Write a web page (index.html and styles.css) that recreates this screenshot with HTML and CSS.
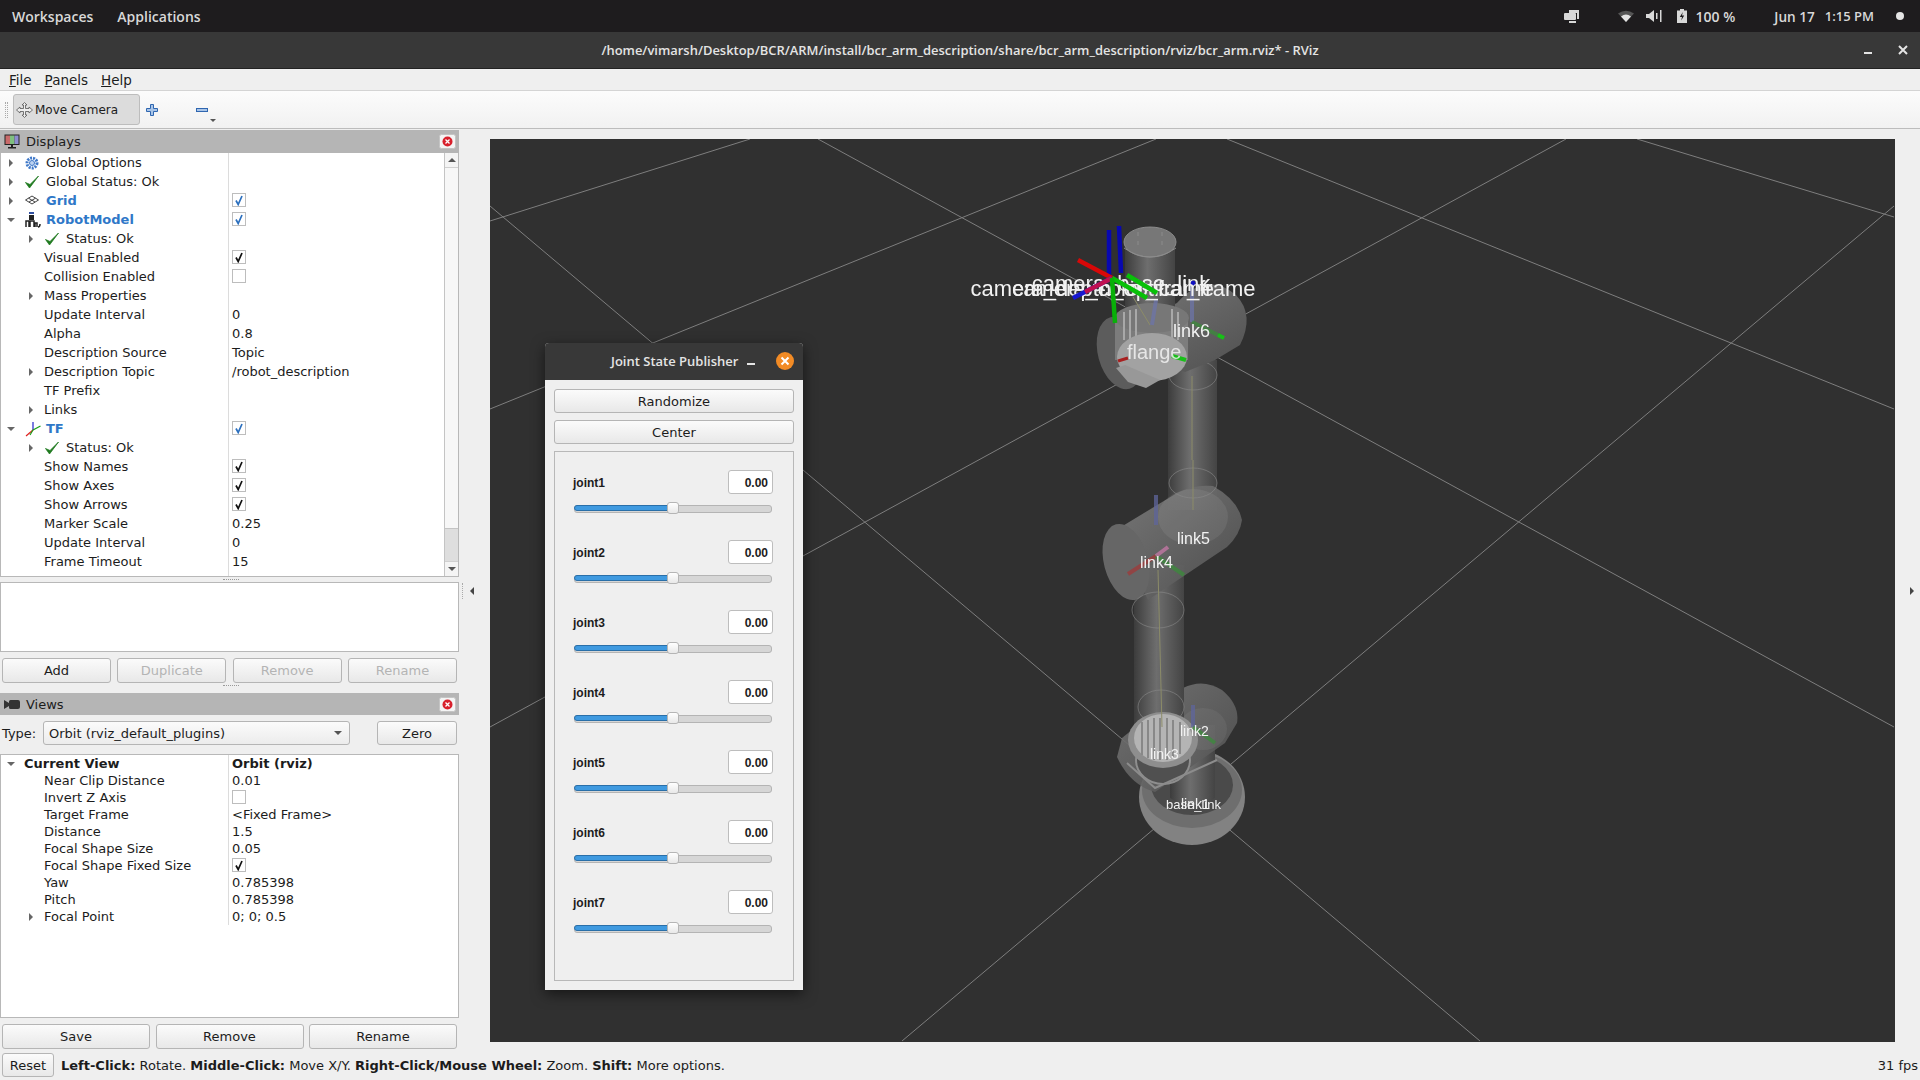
FILE: index.html
```html
<!DOCTYPE html>
<html lang="en">
<head>
    <meta charset="UTF-8">
    <title>RViz</title>
    <link rel="stylesheet" href="styles.css">
</head>
<body>
    <svg class="icon-defs">
        <symbol id="i-check" viewBox="0 0 14 14"><path d="M4 7.5 6.2 11.5 10 3" fill="none" stroke="currentColor" stroke-width="1.7"/></symbol>
        <symbol id="i-ok" viewBox="0 0 14 14"><path d="M0.5 7.5 4.5 13 13.5 1 5 9.5Z" fill="#1f7a1f" stroke="#1f7a1f" stroke-width="0.8"/></symbol>
        <symbol id="i-close" viewBox="0 0 17 15"><rect x="0.5" y="0.5" width="16" height="14" rx="2" fill="#f4f4f4" stroke="#c4c4c4"/><circle cx="8.5" cy="7.5" r="5" fill="#d8202c"/><path d="M6.5 5.5 10.5 9.5M10.5 5.5 6.5 9.5" stroke="#fff" stroke-width="1.3"/></symbol>
    </svg>

    <!-- Desktop top bar -->
    <div class="topbar">
        <span class="top-menu">Workspaces</span>
        <span class="top-menu">Applications</span>
        <div class="top-right">
            <svg class="tray-windows" width="16" height="14" viewBox="0 0 16 14"><path d="M5 1h10v9h-2V4H5Z" fill="#d8d8d8"/><rect x="0" y="4" width="12" height="7" rx="1" fill="#d8d8d8"/><rect x="5" y="12" width="7" height="2" fill="#d8d8d8"/></svg>
            <svg class="tray-wifi" width="16" height="12" viewBox="0 0 16 12"><path d="M0 3.5Q8 -2 16 3.5L8 12Z" fill="#555"/><path d="M3 6.5Q8 2.5 13 6.5L8 12Z" fill="#e4e4e4"/></svg>
            <svg class="tray-sound" width="16" height="12" viewBox="0 0 16 12"><path d="M0 4h3l5-4v12l-5-4H0Z" fill="#d8d8d8"/><rect x="10" y="3" width="1.5" height="6" fill="#d8d8d8"/><rect x="14" y="0" width="1.5" height="12" fill="#d8d8d8"/></svg>
            <svg class="tray-battery" width="10" height="14" viewBox="0 0 10 14"><path d="M3 0h4v1.500h3V14H0V1.500h3Z" fill="#d8d8d8"/><path d="M5.800 3 2.800 8H5L4.200 11.500 7.200 6.500H5Z" fill="#1e1c1e"/></svg>
            <span class="top-percent">100 %</span>
            <span class="top-date">Jun 17</span>
            <span class="top-time">1:15 PM</span>
            <span class="top-dot"></span>
        </div>
    </div>

    <!-- Window title bar -->
    <div class="titlebar">
        <span class="title-text">/home/vimarsh/Desktop/BCR/ARM/install/bcr_arm_description/share/bcr_arm_description/rviz/bcr_arm.rviz* - RViz</span>
        <span class="win-min"></span>
        <svg class="win-close" width="10" height="10" viewBox="0 0 10 10"><path d="M1 1 9 9M9 1 1 9" stroke="#e4e4e4" stroke-width="2"/></svg>
    </div>

    <div class="menubar">
        <span class="menu-item"><u>F</u>ile</span>
        <span class="menu-item"><u>P</u>anels</span>
        <span class="menu-item"><u>H</u>elp</span>
    </div>

    <div class="toolbar">
        <span class="grip"></span>
        <div class="tool-active">
            <svg width="17" height="16" viewBox="0 0 17 16"><path d="M8.500 0.500 11 3H9.500V6.500H13V5L16.500 8 13 11V9.500H9.500V13H11L8.500 15.500 6 13H7.500V9.500H4V11L0.500 8 4 5V6.500H7.500V3H6Z" fill="#eee" stroke="#555" stroke-width="0.8"/></svg>
            <span>Move Camera</span>
        </div>
        <svg class="tool-plus" width="12" height="12" viewBox="0 0 12 12"><path d="M4.500 0.500h3v4h4v3h-4v4h-3v-4h-4v-3h4Z" fill="#a9c5e8" stroke="#2f66b0"/></svg>
        <svg class="tool-minus" width="12" height="4" viewBox="0 0 12 4"><rect x="0.500" y="0.500" width="11" height="3" fill="#a9c5e8" stroke="#2f66b0"/></svg>
        <span class="tool-drop"></span>
    </div>

    <div class="main">
        <div class="dock">
            <!-- Displays panel -->
            <div class="panel-head displays-head">
                <svg width="16" height="15" viewBox="0 0 16 15"><rect x="0.500" y="0.500" width="15" height="10.500" fill="#222"/><rect x="1.500" y="1.500" width="4.500" height="8.500" fill="#c96a6a"/><rect x="6" y="1.500" width="4.500" height="8.500" fill="#7fc07f"/><rect x="10.500" y="1.500" width="4" height="8.500" fill="#8d8dd0"/><path d="M7 11h2v2h3v1.500H4V13h3Z" fill="#222"/></svg>
                <span class="panel-title">Displays</span>
                <svg class="panel-close" width="17" height="15"><use href="#i-close"/></svg>
            </div>
            <div class="tree displays-tree">
                <div class="tree-scroll">
                    <div class="row"><div class="name"><i class="arrow a0"></i><svg class="ticon" width="14" height="14" viewBox="0 0 14 14"><circle cx="7" cy="7" r="5" fill="none" stroke="#3f78c8" stroke-width="3" stroke-dasharray="2 1"/><circle cx="7" cy="7" r="2.500" fill="#bcd2f0" stroke="#3f78c8"/></svg><span class="label">Global Options</span></div><div class="val"></div></div>
                    <div class="row"><div class="name"><i class="arrow a0"></i><svg class="ticon" width="14" height="14"><use href="#i-ok"/></svg><span class="label">Global Status: Ok</span></div><div class="val"></div></div>
                    <div class="row"><div class="name"><i class="arrow a0"></i><svg class="ticon" width="14" height="14" viewBox="0 0 14 14"><path d="M7 2 13.500 6 7 10 .5 6ZM3.500 4.200 10 8M10.500 4.200 4 8" fill="none" stroke="#444"/></svg><span class="label bold blue">Grid</span></div><div class="val"><span class="box on-blue"><svg width="14" height="14"><use href="#i-check"/></svg></span></div></div>
                    <div class="row"><div class="name"><i class="arrow down a0"></i><svg class="ticon" width="16" height="16" viewBox="0 0 16 16"><rect x="4" y="0" width="5" height="2" fill="#2f4fa0"/><rect x="4" y="3" width="5" height="5" fill="#222"/><path d="M1 15V9h3v6M5 15V9h4v6M10 15V11h2v4M13 15Q15 15 15 12" fill="none" stroke="#222" stroke-width="1.500"/></svg><span class="label bold blue">RobotModel</span></div><div class="val"><span class="box on-blue"><svg width="14" height="14"><use href="#i-check"/></svg></span></div></div>
                    <div class="row"><div class="name"><i class="arrow a1"></i><svg class="ticon t1" width="14" height="14"><use href="#i-ok"/></svg><span class="label l2">Status: Ok</span></div><div class="val"></div></div>
                    <div class="row"><div class="name"><span class="label l1">Visual Enabled</span></div><div class="val"><span class="box"><svg width="14" height="14"><use href="#i-check"/></svg></span></div></div>
                    <div class="row"><div class="name"><span class="label l1">Collision Enabled</span></div><div class="val"><span class="box"></span></div></div>
                    <div class="row"><div class="name"><i class="arrow a1"></i><span class="label l1">Mass Properties</span></div><div class="val"></div></div>
                    <div class="row"><div class="name"><span class="label l1">Update Interval</span></div><div class="val">0</div></div>
                    <div class="row"><div class="name"><span class="label l1">Alpha</span></div><div class="val">0.8</div></div>
                    <div class="row"><div class="name"><span class="label l1">Description Source</span></div><div class="val">Topic</div></div>
                    <div class="row"><div class="name"><i class="arrow a1"></i><span class="label l1">Description Topic</span></div><div class="val">/robot_description</div></div>
                    <div class="row"><div class="name"><span class="label l1">TF Prefix</span></div><div class="val"></div></div>
                    <div class="row"><div class="name"><i class="arrow a1"></i><span class="label l1">Links</span></div><div class="val"></div></div>
                    <div class="row"><div class="name"><i class="arrow down a0"></i><svg class="ticon" width="16" height="16" viewBox="0 0 16 16"><path d="M8 9V1" stroke="#2222cc" stroke-width="1.200"/><path d="M8 9 1 15" stroke="#e02020" stroke-width="1.200"/><path d="M8 9 15.500 5" stroke="#18a018" stroke-width="1.200"/><path d="M8 9 5 14" stroke="#18a018" stroke-width="1.200"/></svg><span class="label bold blue">TF</span></div><div class="val"><span class="box on-blue"><svg width="14" height="14"><use href="#i-check"/></svg></span></div></div>
                    <div class="row"><div class="name"><i class="arrow a1"></i><svg class="ticon t1" width="14" height="14"><use href="#i-ok"/></svg><span class="label l2">Status: Ok</span></div><div class="val"></div></div>
                    <div class="row"><div class="name"><span class="label l1">Show Names</span></div><div class="val"><span class="box"><svg width="14" height="14"><use href="#i-check"/></svg></span></div></div>
                    <div class="row"><div class="name"><span class="label l1">Show Axes</span></div><div class="val"><span class="box"><svg width="14" height="14"><use href="#i-check"/></svg></span></div></div>
                    <div class="row"><div class="name"><span class="label l1">Show Arrows</span></div><div class="val"><span class="box"><svg width="14" height="14"><use href="#i-check"/></svg></span></div></div>
                    <div class="row"><div class="name"><span class="label l1">Marker Scale</span></div><div class="val">0.25</div></div>
                    <div class="row"><div class="name"><span class="label l1">Update Interval</span></div><div class="val">0</div></div>
                    <div class="row"><div class="name"><span class="label l1">Frame Timeout</span></div><div class="val">15</div></div>
                    <div class="row"><div class="name"><i class="arrow a1"></i><span class="label l1">Frames</span></div><div class="val"></div></div>
                </div>
                <div class="scrollbar">
                    <div class="sb-btn"><i class="tri-up"></i></div>
                    <div class="sb-track"><div class="sb-thumb"></div></div>
                    <div class="sb-btn"><i class="tri-down"></i></div>
                </div>
            </div>
            <div class="split-h"></div>
            <div class="desc-box"></div>
            <div class="btn-row displays-btns">
                <button class="btn">Add</button>
                <button class="btn off">Duplicate</button>
                <button class="btn off">Remove</button>
                <button class="btn off">Rename</button>
            </div>
            <div class="split-h views-split"></div>

            <!-- Views panel -->
            <div class="panel-head views-head">
                <svg width="16" height="9" viewBox="0 0 16 9"><path d="M0 0 5 3V1.500Q5 0 6.500 0H14Q16 0 16 2V7Q16 9 14 9H6.500Q5 9 5 7.500V6L0 9Z" fill="#333"/></svg>
                <span class="panel-title">Views</span>
                <svg class="panel-close" width="17" height="15"><use href="#i-close"/></svg>
            </div>
            <div class="type-row">
                <span class="type-label">Type:</span>
                <div class="combo"><span>Orbit (rviz_default_plugins)</span><i class="tri-down"></i></div>
                <button class="btn zero">Zero</button>
            </div>
            <div class="tree views-tree">
                <div class="vrow"><div class="name"><i class="arrow down a0"></i><span class="label head">Current View</span></div><div class="val bold">Orbit (rviz)</div></div>
                <div class="vrow"><div class="name"><span class="label l1">Near Clip Distance</span></div><div class="val">0.01</div></div>
                <div class="vrow"><div class="name"><span class="label l1">Invert Z Axis</span></div><div class="val"><span class="box"></span></div></div>
                <div class="vrow"><div class="name"><span class="label l1">Target Frame</span></div><div class="val">&lt;Fixed Frame&gt;</div></div>
                <div class="vrow"><div class="name"><span class="label l1">Distance</span></div><div class="val">1.5</div></div>
                <div class="vrow"><div class="name"><span class="label l1">Focal Shape Size</span></div><div class="val">0.05</div></div>
                <div class="vrow"><div class="name"><span class="label l1">Focal Shape Fixed Size</span></div><div class="val"><span class="box"><svg width="14" height="14"><use href="#i-check"/></svg></span></div></div>
                <div class="vrow"><div class="name"><span class="label l1">Yaw</span></div><div class="val">0.785398</div></div>
                <div class="vrow"><div class="name"><span class="label l1">Pitch</span></div><div class="val">0.785398</div></div>
                <div class="vrow"><div class="name"><i class="arrow a1"></i><span class="label l1">Focal Point</span></div><div class="val">0; 0; 0.5</div></div>
            </div>
            <div class="btn-row views-btns">
                <button class="btn">Save</button>
                <button class="btn">Remove</button>
                <button class="btn">Rename</button>
            </div>
        </div>

        <div class="side-left">
            <span class="side-grip"></span>
            <i class="tri-left"></i>
        </div>

        <!-- 3D view -->
        <svg class="viewport" viewBox="490 139 1405 903">
            <defs>
                <linearGradient id="tube" x1="0" x2="1" y1="0" y2="0">
                    <stop offset="0" stop-color="#3c3c3c"/>
                    <stop offset="0.45" stop-color="#6e6e6e"/>
                    <stop offset="1" stop-color="#444"/>
                </linearGradient>
                <linearGradient id="body" x1="0" x2="1" y1="0" y2="1">
                    <stop offset="0" stop-color="#7a7a7a"/>
                    <stop offset="1" stop-color="#505050"/>
                </linearGradient>
            </defs>
            <g class="grid-lines">
                <line x1="818" y1="139" x2="1894" y2="727"/>
                <line x1="490" y1="206" x2="1480" y2="1041"/>
                <line x1="1227" y1="139" x2="1894" y2="409"/>
                <line x1="1637" y1="139" x2="1894" y2="217"/>
                <line x1="750" y1="139" x2="490" y2="221"/>
                <line x1="1156" y1="139" x2="490" y2="409"/>
                <line x1="1566" y1="139" x2="490" y2="727"/>
                <line x1="1894" y1="206" x2="902" y2="1041"/>
            </g>

            <g class="robot">
                <!-- base -->
                <ellipse cx="1192" cy="797" rx="53" ry="48" fill="#828282"/>
                <ellipse cx="1192" cy="790" rx="50" ry="38" fill="#6e6e6e"/>
                <ellipse cx="1192" cy="785" rx="41" ry="30" fill="#4a4a4a"/>
                <path d="M1170 725H1215V798Q1192 812 1170 798Z" fill="url(#tube)"/>
                <!-- shoulder -->
                <path d="M1122 738 1183 688Q1203 678 1222 690 1240 705 1237 723L1225 743 1155 792Q1130 785 1117 757Z" fill="url(#body)" fill-opacity="0.88"/>
                <ellipse cx="1203" cy="729" rx="24" ry="21" fill="#fff" fill-opacity="0.06"/>
                <!-- lower tube -->
                <rect x="1134" y="565" width="50" height="165" fill="url(#tube)"/>
                <ellipse cx="1161" cy="707" rx="23" ry="17" class="ghost"/>
                <ellipse cx="1163" cy="760" rx="27" ry="24" fill="#505050" stroke="#8e8e8e" stroke-width="2"/>
                <ellipse cx="1163" cy="740" rx="35" ry="28" fill="#8e8e8e"/>
                <ellipse cx="1163" cy="738" rx="29" ry="24" fill="#b4b4b4"/>
                <path d="M1142 722V755M1148 720V758M1154 718V760M1160 718V760M1167 718V760M1173 720V758M1180 722V754" stroke="#888" stroke-width="2"/>
                <path d="M1127 763 1155 788 1217 760" fill="none" stroke="#8c8c8c" stroke-width="2"/>
                <!-- upper tube -->
                <rect x="1168" y="360" width="49" height="150" fill="url(#tube)"/>
                <!-- elbow -->
                <path d="M1116 530 1177 493Q1195 484 1213 486 1238 500 1242 520 1240 535 1227 547L1148 600Z" fill="url(#body)" fill-opacity="0.95"/>
                <ellipse cx="1126" cy="562" rx="22" ry="39" transform="rotate(-15 1126 562)" fill="#666"/>
                <ellipse cx="1193" cy="517" rx="35" ry="28" fill="#fff" fill-opacity="0.07"/>
                <ellipse cx="1158" cy="610" rx="26" ry="18" class="ghost"/>
                <ellipse cx="1193" cy="483" rx="24" ry="15" class="ghost"/>
                <ellipse cx="1193" cy="375" rx="24" ry="15" class="ghost"/>
                <!-- wrist and flange -->
                <path d="M1098 340 1177 303Q1206 270 1236 295 1255 315 1240 345L1215 360 1185 372Z" fill="url(#body)"/>
                <ellipse cx="1120" cy="353" rx="22" ry="37" transform="rotate(-15 1120 353)" fill="#5c5c5c"/>
                <rect x="1125" y="242" width="50" height="76" fill="url(#tube)"/>
                <ellipse cx="1150" cy="242" rx="26" ry="15" fill="#777" stroke="#8c8c8c"/>
                <path d="M1124 248Q1150 266 1176 248M1138 232V236M1162 232V236M1138 241V245M1162 241V245" fill="none" stroke="#8c8c8c"/>
                <rect x="1115" y="318" width="73" height="42" fill="#8a8a8a" fill-opacity="0.7"/>
                <ellipse cx="1152" cy="318" rx="37" ry="15" fill="#777"/>
                <path d="M1124 312V340M1130 310V340M1136 309V340M1172 309V340M1178 312V340" stroke="#a8a8a8" stroke-width="2"/>
                <ellipse cx="1152" cy="357" rx="35" ry="24" fill="#a2a2a2"/>
                <path d="M1116 368 1128 382 1146 388 1160 380 1125 365Z" fill="#989898"/>

                <!-- olive joint links -->
                <g class="joint-links">
                    <line x1="1193" y1="460" x2="1193" y2="510"/>
                    <line x1="1158" y1="570" x2="1162" y2="727"/>
                    <line x1="1192" y1="376" x2="1192" y2="460"/>
                    <line x1="1133" y1="297" x2="1150" y2="325"/>
                </g>

                <!-- faded axes -->
                <g class="axes-soft">
                    <line x1="1156" y1="300" x2="1152" y2="325" stroke="#6c74a8"/>
                    <line x1="1192" y1="322" x2="1192" y2="283" stroke="#6c74a8"/>
                    <line x1="1192" y1="322" x2="1224" y2="338" stroke="#3b8b3b"/>
                    <line x1="1156" y1="525" x2="1156" y2="495" stroke="#5f659c"/>
                    <line x1="1156" y1="556" x2="1128" y2="574" stroke="#a03a3a"/>
                    <line x1="1156" y1="556" x2="1184" y2="575" stroke="#3b8b3b"/>
                    <line x1="1156" y1="556" x2="1168" y2="547" stroke="#c878a8"/>
                    <line x1="1193" y1="727" x2="1193" y2="705" stroke="#5f659c"/>
                    <line x1="1193" y1="727" x2="1215" y2="743" stroke="#3b8b3b"/>
                </g>
                <line x1="1118" y1="361" x2="1128" y2="358" stroke="#a82020" stroke-width="3"/>
                <line x1="1172" y1="356" x2="1186" y2="360" stroke="#18c018" stroke-width="4"/>
                <line x1="1218" y1="335" x2="1224" y2="338" stroke="#18c018" stroke-width="4"/>
                <circle cx="1193" cy="283" r="2.500" fill="#1010c0"/>

                <!-- strong axes -->
                <g class="labels big">
                    <text x="1113" y="296" text-anchor="middle">camera_depth_optical_frame</text>
                    <text x="1113" y="296" text-anchor="middle">camera_color_frame</text>
                    <text x="1121" y="291" text-anchor="middle">camera_base_link</text>
                </g>
                <g class="axes-strong">
                    <line x1="1109" y1="278" x2="1109" y2="230" stroke="#0808b0"/>
                    <line x1="1121" y1="273" x2="1119" y2="226" stroke="#0808b0"/>
                    <line x1="1112" y1="278" x2="1078" y2="260" stroke="#d80808"/>
                    <line x1="1112" y1="278" x2="1073" y2="298" stroke="#1818d0"/>
                    <line x1="1112" y1="278" x2="1085" y2="292" stroke="#c01050"/>
                    <line x1="1112" y1="278" x2="1147" y2="298" stroke="#08c008"/>
                    <line x1="1127" y1="275" x2="1157" y2="293" stroke="#08c008"/>
                    <line x1="1112" y1="278" x2="1115" y2="323" stroke="#08b008"/>
                </g>
                <g class="labels">
                    <text x="1127" y="359" class="lb-flange">flange</text>
                    <text x="1173" y="337" class="lb-link">link6</text>
                    <text x="1177" y="544" class="lb-small">link5</text>
                    <text x="1140" y="568" class="lb-small">link4</text>
                    <text x="1180" y="736" class="lb-tiny">link2</text>
                    <text x="1150" y="759" class="lb-tiny">link3</text>
                    <text x="1166" y="809" class="lb-base">base_link</text>
                    <text x="1181" y="809" class="lb-tiny">link1</text>
                </g>
            </g>
        </svg>

        <div class="side-right"><i class="tri-right"></i></div>
    </div>

    <div class="statusbar">
        <button class="btn reset">Reset</button>
        <span class="status-text"><b>Left-Click:</b> Rotate. <b>Middle-Click:</b> Move X/Y. <b>Right-Click/Mouse Wheel:</b> Zoom. <b>Shift:</b> More options.</span>
        <span class="fps">31 fps</span>
    </div>

    <!-- Floating dialog over the 3D view -->
    <div class="dialog">
        <div class="dialog-title">
            <span class="dialog-name">Joint State Publisher</span>
            <span class="dialog-min"></span>
            <span class="dialog-close"><svg width="10" height="10" viewBox="0 0 10 10"><path d="M1.500 1.500 8.500 8.500M8.500 1.500 1.500 8.500" stroke="#fff" stroke-width="2"/></svg></span>
        </div>
        <div class="dialog-body">
            <button class="btn wide">Randomize</button>
            <button class="btn wide">Center</button>
            <div class="joints">
                <div class="joint"><div class="joint-top"><span>joint1</span><span class="spin">0.00</span></div><div class="slider"><div class="slider-fill"></div><div class="slider-handle"></div></div></div>
                <div class="joint"><div class="joint-top"><span>joint2</span><span class="spin">0.00</span></div><div class="slider"><div class="slider-fill"></div><div class="slider-handle"></div></div></div>
                <div class="joint"><div class="joint-top"><span>joint3</span><span class="spin">0.00</span></div><div class="slider"><div class="slider-fill"></div><div class="slider-handle"></div></div></div>
                <div class="joint"><div class="joint-top"><span>joint4</span><span class="spin">0.00</span></div><div class="slider"><div class="slider-fill"></div><div class="slider-handle"></div></div></div>
                <div class="joint"><div class="joint-top"><span>joint5</span><span class="spin">0.00</span></div><div class="slider"><div class="slider-fill"></div><div class="slider-handle"></div></div></div>
                <div class="joint"><div class="joint-top"><span>joint6</span><span class="spin">0.00</span></div><div class="slider"><div class="slider-fill"></div><div class="slider-handle"></div></div></div>
                <div class="joint"><div class="joint-top"><span>joint7</span><span class="spin">0.00</span></div><div class="slider"><div class="slider-fill"></div><div class="slider-handle"></div></div></div>
            </div>
        </div>
    </div>
</body>
</html>
```

FILE: styles.css
```css
/* General page styles */
* {
    box-sizing: border-box;
}

body {
    margin: 0;
    width: 1920px;
    height: 1080px;
    overflow: hidden;
    display: flex;
    flex-direction: column;
    background-color: #efefef;
    font-family: "DejaVu Sans", sans-serif;
    font-size: 13px;
    color: #1c1c1c;
}

.icon-defs {
    display: none;
}

/* Desktop top bar */
.topbar {
    height: 32px;
    flex: none;
    display: flex;
    align-items: center;
    background-color: #1e1c1e;
    color: #d8d8d8;
    font-family: "Open Sans", sans-serif;
    font-weight: 600;
    font-size: 14px;
}

.top-menu {
    margin-left: 12px;
    margin-right: 12px;
}

.top-right {
    margin-left: auto;
    display: flex;
    align-items: center;
}

.tray-wifi {
    margin-left: 38px;
}

.tray-sound {
    margin-left: 12px;
}

.tray-battery {
    margin-left: 15px;
}

.top-percent {
    margin-left: 9px;
}

.top-date {
    margin-left: 39px;
    font-size: 13.6px;
}

.top-time {
    margin-left: 10px;
    font-size: 13px;
}

.top-dot {
    width: 8px;
    height: 8px;
    margin-left: 22px;
    margin-right: 16px;
    border-radius: 50%;
    background-color: #e4e4e4;
}

/* Window title bar */
.titlebar {
    height: 37px;
    flex: none;
    position: relative;
    display: flex;
    align-items: center;
    justify-content: center;
    background-color: #383838;
    border-bottom: 1px solid #222;
    color: #e4e4e4;
    font-family: "Open Sans", sans-serif;
    font-weight: 600;
    font-size: 12.95px;
}

.win-min {
    position: absolute;
    left: 1864px;
    top: 20px;
    width: 8px;
    height: 2px;
    background-color: #e4e4e4;
}

.win-close {
    position: absolute;
    left: 1898px;
    top: 13px;
}

/* Menu and tool bars */
.menubar {
    height: 22px;
    flex: none;
    display: flex;
    align-items: center;
    padding-left: 9px;
    gap: 13px;
    background-color: #efefef;
    border-bottom: 1px solid #d4d4d4;
    font-size: 13.5px;
}

.toolbar {
    height: 38px;
    flex: none;
    display: flex;
    align-items: center;
    position: relative;
    padding-left: 5px;
    background: linear-gradient(#fcfcfc, #f1f1f1);
    border-bottom: 1px solid #bcbcbc;
}

.grip {
    width: 3px;
    height: 16px;
    border-left: 1px dotted #aaa;
    border-right: 1px dotted #aaa;
}

.tool-active {
    width: 127px;
    height: 31px;
    margin-left: 5px;
    padding-left: 2px;
    display: flex;
    align-items: center;
    gap: 2px;
    background-color: #dcdcdc;
    border: 1px solid #bdbdbd;
    border-radius: 3px;
    font-size: 12px;
}

.tool-plus {
    margin-left: 6px;
}

.tool-minus {
    margin-left: 38px;
}

.tool-drop {
    position: absolute;
    left: 210px;
    top: 28px;
    border-left: 3px solid transparent;
    border-right: 3px solid transparent;
    border-top: 3px solid #555;
}

/* Main area */
.main {
    height: 922px;
    flex: none;
    display: flex;
    padding-top: 1px;
}

.dock {
    width: 459px;
    flex: none;
    display: flex;
    flex-direction: column;
}

.panel-head {
    flex: none;
    display: flex;
    align-items: center;
    padding-left: 4px;
    background-color: #b5b5b5;
}

.displays-head {
    height: 23px;
}

.views-head {
    height: 22px;
}

.panel-title {
    margin-left: 6px;
}

.panel-close {
    margin-left: auto;
    margin-right: 3px;
}

/* Property trees */
.tree {
    background-color: #fff;
    border: 1px solid #b8b8b8;
    position: relative;
    overflow: hidden;
}

.displays-tree {
    height: 424px;
    flex: none;
    display: flex;
    border-top: none;
}

.views-tree {
    height: 264px;
    flex: none;
    margin-top: 9px;
}

.tree-scroll {
    flex: 1;
    overflow: hidden;
}

.row,
.vrow {
    display: flex;
    align-items: center;
}

.row {
    height: 19px;
}

.vrow {
    height: 17px;
}

.name {
    width: 228px;
    height: 100%;
    flex: none;
    display: flex;
    align-items: center;
    position: relative;
    border-right: 1px solid #dcdcdc;
}

.val {
    height: 100%;
    flex: 1;
    display: flex;
    align-items: center;
    padding-left: 3px;
    white-space: nowrap;
    border-left: 1px solid #dcdcdc;
    margin-left: -1px;
}

.label {
    position: absolute;
    left: 45px;
    white-space: nowrap;
}

.label.l1 {
    left: 43px;
}

.label.l2 {
    left: 65px;
}

.label.head {
    left: 23px;
    font-weight: bold;
}

.bold {
    font-weight: bold;
}

.blue {
    color: #2f78c8;
}

.ticon {
    position: absolute;
    left: 24px;
}

.ticon.t1 {
    left: 44px;
}

.arrow {
    position: absolute;
    border-top: 4px solid transparent;
    border-bottom: 4px solid transparent;
    border-left: 4px solid #666;
}

.arrow.a0 {
    left: 8px;
}

.arrow.a1 {
    left: 28px;
}

.arrow.down {
    left: 6px;
    border-left: 4px solid transparent;
    border-right: 4px solid transparent;
    border-top: 4px solid #666;
    border-bottom: none;
}

.box {
    width: 14px;
    height: 14px;
    flex: none;
    display: block;
    margin-bottom: 2px;
    background-color: #fff;
    border: 1px solid #bdbdbd;
    color: #111;
    overflow: hidden;
}

.box svg {
    display: block;
    margin: -1px;
}

.box.on-blue {
    color: #2b6fbe;
}

/* Scrollbar */
.scrollbar {
    width: 14px;
    flex: none;
    display: flex;
    flex-direction: column;
    background-color: #f7f7f7;
    border-left: 1px solid #c4c4c4;
}

.sb-btn {
    height: 14px;
    flex: none;
    display: flex;
    align-items: center;
    justify-content: center;
    background-color: #f4f4f4;
}

.sb-track {
    flex: 1;
    display: flex;
    flex-direction: column;
    justify-content: flex-end;
    border-top: 1px solid #d0d0d0;
    border-bottom: 1px solid #d0d0d0;
}

.sb-thumb {
    height: 33px;
    background-color: #dedede;
    border-top: 1px solid #c4c4c4;
}

.tri-up {
    border-left: 4px solid transparent;
    border-right: 4px solid transparent;
    border-bottom: 4px solid #555;
}

.tri-down {
    border-left: 4px solid transparent;
    border-right: 4px solid transparent;
    border-top: 4px solid #555;
}

.tri-left {
    border-top: 4px solid transparent;
    border-bottom: 4px solid transparent;
    border-right: 4px solid #444;
}

.tri-right {
    border-top: 4px solid transparent;
    border-bottom: 4px solid transparent;
    border-left: 4px solid #444;
}

/* Splitters, description, buttons */
.split-h {
    height: 5px;
    flex: none;
    position: relative;
}

.split-h::after {
    content: "";
    position: absolute;
    left: 223px;
    top: 2px;
    width: 16px;
    border-top: 1px dotted #999;
}

.views-split {
    height: 10px;
}

.desc-box {
    height: 70px;
    flex: none;
    background-color: #fff;
    border: 1px solid #b8b8b8;
}

.btn-row {
    height: 25px;
    flex: none;
    display: flex;
    justify-content: space-between;
    padding: 0 2px;
}

.displays-btns {
    margin-top: 6px;
}

.views-btns {
    margin-top: 6px;
}

.btn {
    height: 25px;
    padding: 0;
    font-family: "DejaVu Sans", sans-serif;
    font-size: 13px;
    color: #1c1c1c;
    background: linear-gradient(#fbfbfb, #e8e8e8);
    border: 1px solid #b5b5b5;
    border-radius: 3px;
}

.displays-btns .btn {
    width: 109px;
}

.views-btns .btn {
    width: 148px;
}

.btn.off {
    color: #b4b4b4;
}

.type-row {
    height: 24px;
    flex: none;
    margin-top: 6px;
    display: flex;
    align-items: center;
    padding-left: 2px;
}

.type-label {
    width: 41px;
}

.combo {
    width: 307px;
    height: 24px;
    display: flex;
    align-items: center;
    justify-content: space-between;
    padding: 0 7px 0 5px;
    background: linear-gradient(#fbfbfb, #ececec);
    border: 1px solid #b5b5b5;
    border-radius: 3px;
}

.btn.zero {
    width: 80px;
    height: 24px;
    margin-left: 27px;
}

/* Side collapse handles */
.side-left {
    width: 31px;
    flex: none;
    display: flex;
    align-items: center;
    padding-left: 3px;
    gap: 7px;
}

.side-grip {
    height: 16px;
    border-left: 1px dotted #aaa;
}

.viewport {
    width: 1405px;
    height: 903px;
    flex: none;
    margin-top: 9px;
    background-color: #303030;
    display: block;
}

.side-right {
    flex: 1;
    display: flex;
    align-items: center;
    justify-content: flex-end;
    padding-right: 6px;
}

/* 3D scene */
.grid-lines line {
    stroke: #7e7e7e;
    stroke-width: 1;
}

.robot {
    filter: blur(0.4px);
}

.ghost {
    fill: none;
    stroke: #8a8a8a;
    stroke-opacity: 0.6;
}

.joint-links line {
    stroke: #8c8c68;
    stroke-width: 1;
}

.axes-soft line {
    stroke-width: 4;
    stroke-opacity: 0.75;
}

.axes-strong line {
    stroke-width: 4.5;
}

.labels text {
    font-family: "Liberation Sans", sans-serif;
    fill: #f2f2f2;
}

.labels.big text {
    font-size: 22px;
}

.lb-flange {
    font-size: 20px;
    fill-opacity: 0.85;
}

.lb-link {
    font-size: 18px;
}

.lb-small {
    font-size: 16px;
}

.lb-tiny {
    font-size: 14px;
}

.lb-base {
    font-size: 13px;
}

/* Status bar */
.statusbar {
    flex: 1;
    display: flex;
    align-items: center;
    padding-left: 2px;
    padding-bottom: 1px;
}

.btn.reset {
    width: 52px;
    height: 24px;
}

.status-text {
    margin-left: 7px;
}

.fps {
    margin-left: auto;
    margin-right: 2px;
}

/* Joint State Publisher dialog */
.dialog {
    position: absolute;
    left: 545px;
    top: 343px;
    width: 258px;
    height: 647px;
    display: flex;
    flex-direction: column;
    background-color: #efefef;
    border-radius: 4px 4px 0 0;
    box-shadow: 0 4px 14px rgba(0, 0, 0, 0.55);
}

.dialog-title {
    height: 37px;
    flex: none;
    position: relative;
    background-color: #383838;
    border-radius: 4px 4px 0 0;
    color: #e4e4e4;
    font-family: "Open Sans", sans-serif;
    font-weight: 600;
    font-size: 13px;
}

.dialog-name {
    position: absolute;
    left: 66px;
    top: 9px;
}

.dialog-min {
    position: absolute;
    left: 202px;
    top: 20px;
    width: 8px;
    height: 2px;
    background-color: #e4e4e4;
}

.dialog-close {
    position: absolute;
    left: 231px;
    top: 9px;
    width: 18px;
    height: 18px;
    display: flex;
    align-items: center;
    justify-content: center;
    border-radius: 50%;
    background-color: #f28b25;
}

.dialog-body {
    flex: 1;
    display: flex;
    flex-direction: column;
    padding: 9px;
}

.btn.wide {
    width: 240px;
    height: 24px;
    flex: none;
    margin-bottom: 7px;
}

.joints {
    flex: 1;
    padding: 18px 20px 0 18px;
    border: 1px solid #b8b8b8;
}

.joint {
    height: 70px;
}

.joint-top {
    height: 24px;
    display: flex;
    align-items: center;
    justify-content: space-between;
    font-family: "Liberation Sans", sans-serif;
    font-weight: bold;
    font-size: 12px;
}

.joint-top span {
    padding-top: 2px;
}

.spin {
    width: 45px;
    height: 24px;
    display: flex;
    align-items: center;
    justify-content: flex-end;
    padding-right: 4px;
    background-color: #fff;
    border: 1px solid #bdbdbd;
    border-radius: 3px;
}

.slider {
    height: 12px;
    margin: 8px 1px 0;
    position: relative;
}

.slider::before {
    content: "";
    position: absolute;
    left: 0;
    right: 0;
    top: 3px;
    height: 6px;
    background-color: #d6d6d6;
    border: 1px solid #b4b4b4;
    border-radius: 3px;
}

.slider-fill {
    position: absolute;
    left: 0;
    top: 3px;
    width: 100px;
    height: 6px;
    background-color: #3f9ae0;
    border: 1px solid #2a6fa8;
    border-radius: 3px;
}

.slider-handle {
    position: absolute;
    left: 93px;
    top: 0;
    width: 12px;
    height: 12px;
    background: linear-gradient(#fff, #e8e8e8);
    border: 1px solid #b5b5b5;
    border-radius: 3px;
}
```
